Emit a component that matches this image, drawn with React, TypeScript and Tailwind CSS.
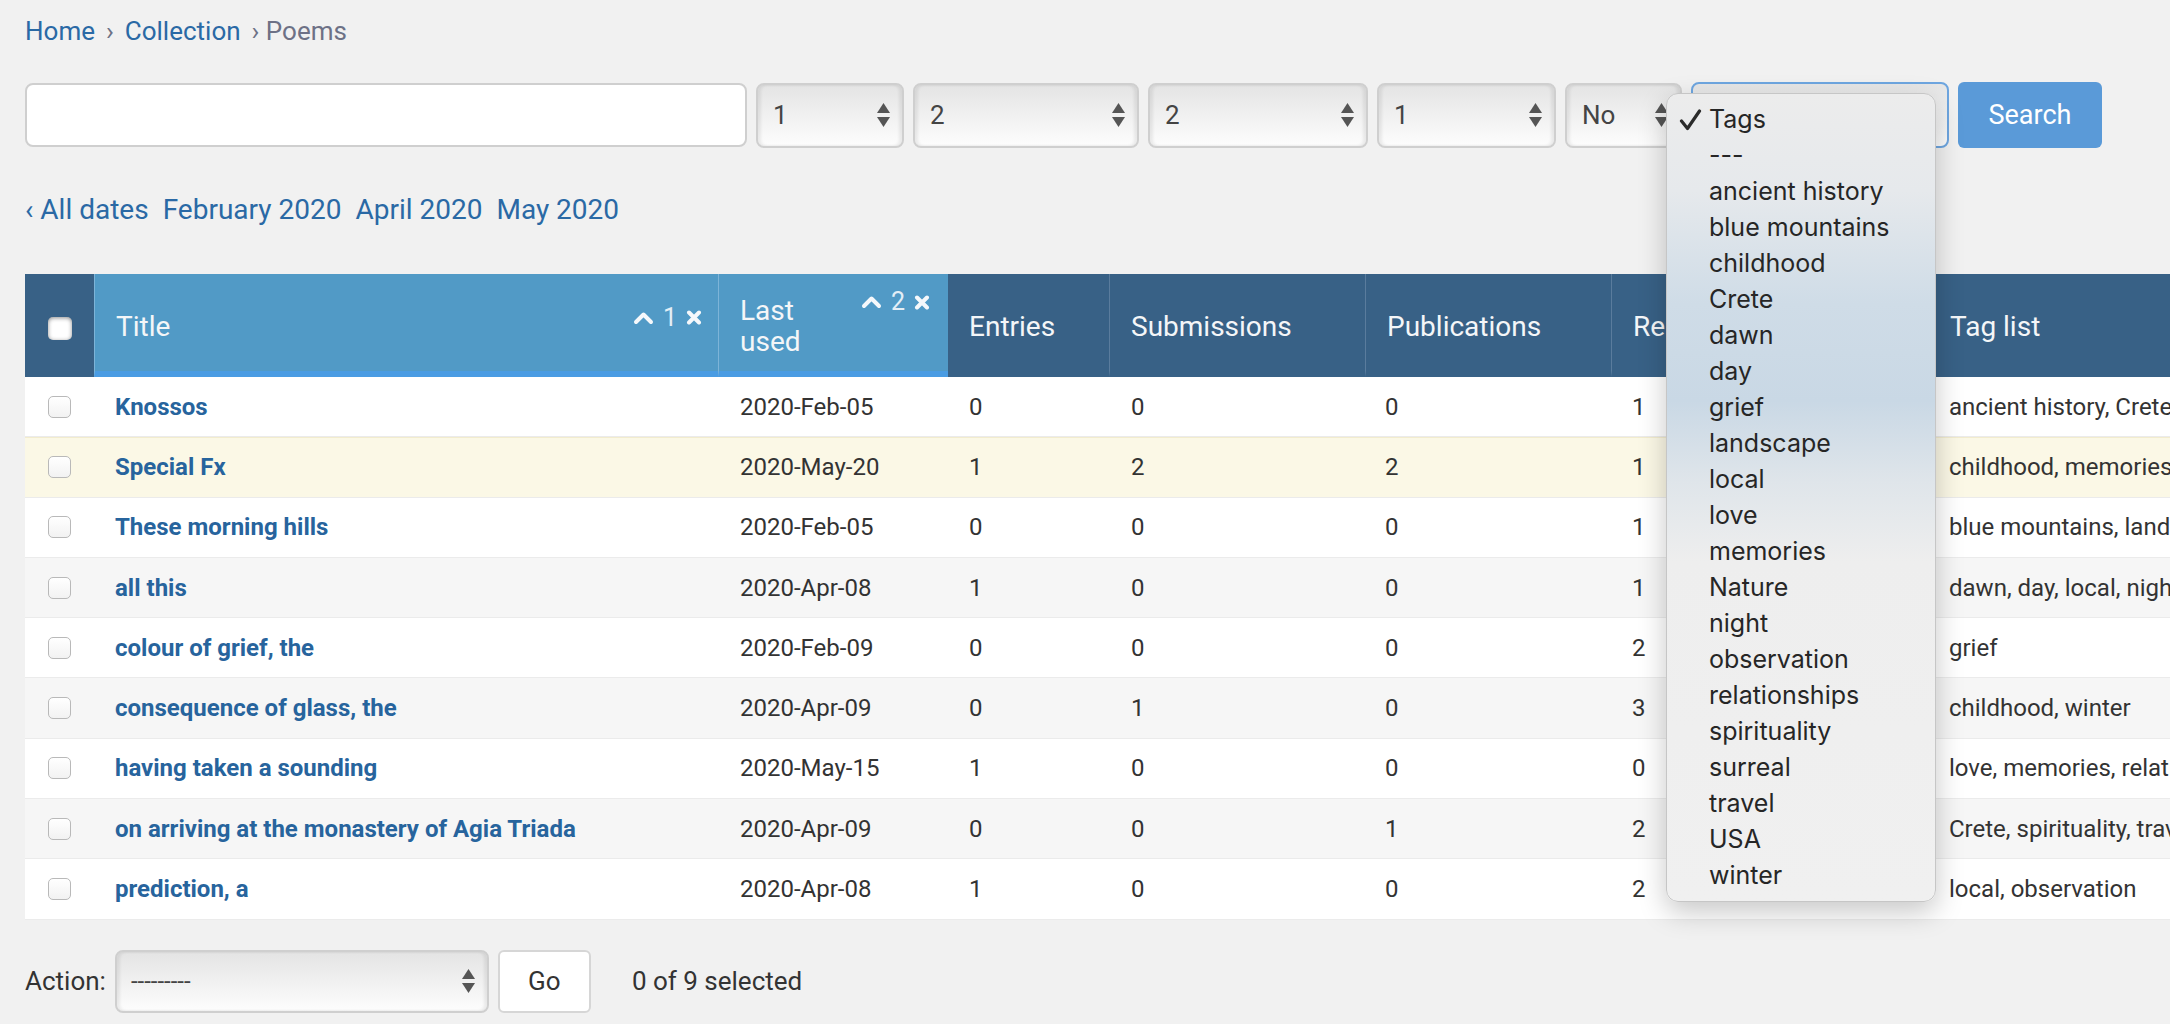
import React from "react";

type Row = {
  title: string;
  date: string;
  entries: number;
  subs: number;
  pubs: number;
  reads: number;
  tags: string;
};

const ROWS: Row[] = [
  { title: "Knossos", date: "2020-Feb-05", entries: 0, subs: 0, pubs: 0, reads: 1, tags: "ancient history, Crete, travel" },
  { title: "Special Fx", date: "2020-May-20", entries: 1, subs: 2, pubs: 2, reads: 1, tags: "childhood, memories, surreal" },
  { title: "These morning hills", date: "2020-Feb-05", entries: 0, subs: 0, pubs: 0, reads: 1, tags: "blue mountains, landscape, Nature" },
  { title: "all this", date: "2020-Apr-08", entries: 1, subs: 0, pubs: 0, reads: 1, tags: "dawn, day, local, night" },
  { title: "colour of grief, the", date: "2020-Feb-09", entries: 0, subs: 0, pubs: 0, reads: 2, tags: "grief" },
  { title: "consequence of glass, the", date: "2020-Apr-09", entries: 0, subs: 1, pubs: 0, reads: 3, tags: "childhood, winter" },
  { title: "having taken a sounding", date: "2020-May-15", entries: 1, subs: 0, pubs: 0, reads: 0, tags: "love, memories, relationships" },
  { title: "on arriving at the monastery of Agia Triada", date: "2020-Apr-09", entries: 0, subs: 0, pubs: 1, reads: 2, tags: "Crete, spirituality, travel" },
  { title: "prediction, a", date: "2020-Apr-08", entries: 1, subs: 0, pubs: 0, reads: 2, tags: "local, observation" },
];

const ROW_BG = [
  "bg-white",
  "bg-[#fbf8e6] border-t border-t-[#f2ecce]",
  "bg-white",
  "bg-[#f6f6f6]",
  "bg-white",
  "bg-[#f6f6f6]",
  "bg-white",
  "bg-[#f6f6f6]",
  "bg-white",
];

const TAGS = [
  "Tags",
  "---",
  "ancient history",
  "blue mountains",
  "childhood",
  "Crete",
  "dawn",
  "day",
  "grief",
  "landscape",
  "local",
  "love",
  "memories",
  "Nature",
  "night",
  "observation",
  "relationships",
  "spirituality",
  "surreal",
  "travel",
  "USA",
  "winter",
];

function Arrows() {
  return (
    <svg width="13" height="24" viewBox="0 0 13 24" className="shrink-0 fill-[#555]">
      <path d="M6.5 0 L13 10 L0 10 Z" />
      <path d="M0 14 L13 14 L6.5 24 Z" />
    </svg>
  );
}

function Select({ value, className }: { value: string; className: string }) {
  return (
    <div
      className={`flex h-[65px] shrink-0 items-center justify-between rounded-[8px] border-2 border-[#cfcfcf] bg-linear-to-b from-[#e4e4e4] to-[#fdfdfd] pl-[15px] pr-[12px] text-[26px] text-[#444] shadow-[inset_3px_0_3px_rgba(0,0,0,0.07),inset_-3px_0_3px_rgba(0,0,0,0.07)] ${className}`}
    >
      <span>{value}</span>
      <Arrows />
    </div>
  );
}

function SortOpts({ n }: { n: string }) {
  return (
    <div className="-mt-[6px] flex shrink-0 items-center gap-[9px] text-[25px] leading-[26px] text-[#e3eef6]">
      <svg width="21" height="14" viewBox="0 0 21 14" fill="none" stroke="#f5f8fb" strokeWidth="4" strokeLinecap="round" strokeLinejoin="round">
        <path d="M3 11 L10.5 3.5 L18 11" />
      </svg>
      <span>{n}</span>
      <svg width="16" height="15" viewBox="0 0 16 15" fill="none" stroke="#f5f8fb" strokeWidth="4" strokeLinecap="round">
        <path d="M3 2.5 L13 12.5 M13 2.5 L3 12.5" />
      </svg>
    </div>
  );
}

function RowCheckbox() {
  return <span className="block h-[22px] w-[23px] rounded-[5px] border border-[#b9b9b9] bg-linear-to-b from-white to-[#f2f2f2]" />;
}

export default function App() {
  return (
    <div className="relative min-h-[1024px] w-full overflow-hidden bg-[#f1f1f1] px-[25px] pt-[16px] font-[Roboto,sans-serif] text-[#333]">
      {/* breadcrumbs */}
      <div className="flex h-[30px] items-center gap-[11px] text-[26px] leading-[30px]">
        <span className="text-[#2a69a5]">Home</span>
        <span className="text-[#6d7186]">›</span>
        <span className="text-[#2a69a5]">Collection</span>
        <span className="text-[#6d7186]">› Poems</span>
      </div>

      {/* search + filters */}
      <div className="mt-[36px] flex h-[66px] items-center gap-[9px]">
        <div className="h-[64px] w-[722px] shrink-0 rounded-[8px] border-2 border-[#cfcfcf] bg-white" />
        <Select value="1" className="w-[148px]" />
        <Select value="2" className="w-[226px]" />
        <Select value="2" className="w-[220px]" />
        <Select value="1" className="w-[179px]" />
        <Select value="No" className="w-[117px]" />
        <div className="flex h-[66px] w-[258px] shrink-0 items-center justify-end rounded-[8px] border-2 border-[#6ea6e0] bg-linear-to-b from-[#e6e6e6] to-[#fdfdfd] pr-[12px]">
          <Arrows />
        </div>
        <button className="h-[66px] w-[144px] shrink-0 rounded-[6px] bg-[#5a9ad8] text-[27px] text-white">
          Search
        </button>
      </div>

      {/* date hierarchy */}
      <div className="mt-[45px] flex gap-[14px] text-[28px] leading-[34px] text-[#2a69a5]">
        <span>‹ All dates</span>
        <span>February 2020</span>
        <span>April 2020</span>
        <span>May 2020</span>
      </div>

      {/* results table */}
      <div className="mt-[47px] w-max">
        <div className="flex h-[103px] text-[28px] leading-[31px] text-[#f4f6f8]">
          <div className="flex w-[69px] shrink-0 items-center justify-center border-b-[6px] border-b-[#386186] bg-[#386186] pt-[12px]">
            <span className="block h-[23px] w-[24px] rounded-[5px] bg-white shadow-[inset_0_1px_4px_rgba(0,0,0,0.45)]" />
          </div>
          <div className="flex w-[624px] shrink-0 items-center border-b-[6px] border-l border-b-[#4a9ce3] border-l-[#7db4d8] bg-[#519ac6] pl-[21px] pr-[16px] pt-[7px]">
            <div className="flex flex-1 items-start justify-between">
              <span>Title</span>
              <SortOpts n="1" />
            </div>
          </div>
          <div className="flex w-[230px] shrink-0 items-center border-b-[6px] border-l border-b-[#4a9ce3] border-l-[#7db4d8] bg-[#519ac6] pl-[21px] pr-[18px] pt-[7px]">
            <div className="flex flex-1 items-start justify-between">
              <span>
                Last
                <br />
                used
              </span>
              <SortOpts n="2" />
            </div>
          </div>
          <div className="flex w-[161px] shrink-0 items-center border-b-[6px] border-b-[#386186] bg-[#386186] pl-[21px] pt-[7px]">
            Entries
          </div>
          <div className="flex w-[256px] shrink-0 items-center border-b-[6px] border-l border-b-[#386186] border-l-[#5a7c9d] bg-[#386186] pl-[21px] pt-[7px]">
            Submissions
          </div>
          <div className="flex w-[246px] shrink-0 items-center border-b-[6px] border-l border-b-[#386186] border-l-[#5a7c9d] bg-[#386186] pl-[21px] pt-[7px]">
            Publications
          </div>
          <div className="flex w-[317px] shrink-0 items-center border-b-[6px] border-l border-b-[#386186] border-l-[#5a7c9d] bg-[#386186] pl-[21px] pt-[7px]">
            Readings
          </div>
          <div className="flex w-[560px] shrink-0 items-center border-b-[6px] border-l border-b-[#386186] border-l-[#5a7c9d] bg-[#386186] pl-[21px] pt-[7px]">
            Tag list
          </div>
        </div>

        {ROWS.map((r, i) => (
          <div key={r.title} className={`flex h-[60.3px] border-b border-b-[#ebebeb] text-[24px] ${ROW_BG[i]}`}>
            <div className="flex w-[69px] shrink-0 items-center justify-center">
              <RowCheckbox />
            </div>
            <div className="flex w-[624px] shrink-0 items-center pl-[21px] font-bold text-[#27649d]">{r.title}</div>
            <div className="flex w-[230px] shrink-0 items-center pl-[22px]">{r.date}</div>
            <div className="flex w-[161px] shrink-0 items-center pl-[21px]">{r.entries}</div>
            <div className="flex w-[256px] shrink-0 items-center pl-[22px]">{r.subs}</div>
            <div className="flex w-[246px] shrink-0 items-center pl-[20px]">{r.pubs}</div>
            <div className="flex w-[317px] shrink-0 items-center pl-[21px]">{r.reads}</div>
            <div className="flex w-[560px] shrink-0 items-center whitespace-nowrap pl-[21px]">{r.tags}</div>
          </div>
        ))}
      </div>

      {/* actions */}
      <div className="mt-[30px] flex h-[63px] items-center text-[26px]">
        <span>Action:</span>
        <div className="ml-[9px] flex h-[63px] w-[374px] items-center justify-between rounded-[8px] border-2 border-[#cfcfcf] bg-linear-to-b from-[#e4e4e4] to-[#fdfdfd] pl-[14px] pr-[12px] shadow-[inset_3px_0_3px_rgba(0,0,0,0.07),inset_-3px_0_3px_rgba(0,0,0,0.07)]">
          <span className="text-[24px] text-[#444]">---------</span>
          <Arrows />
        </div>
        <button className="ml-[9px] h-[63px] w-[93px] rounded-[6px] border-2 border-[#d6d6d6] bg-white text-[26px] text-[#333]">
          Go
        </button>
        <span className="ml-[41px]">0 of 9 selected</span>
      </div>

      {/* open tags menu */}
      <div className="absolute left-[1666px] top-[93px] h-[809px] w-[270px] rounded-[12px] border border-[#c6c6c6] bg-[linear-gradient(180deg,#ececec_0%,#e6e9ec_12%,#cfdce7_26%,#c9d8e5_38%,#dfe5ea_48%,#eeeeee_58%,#f0f0f0_100%)] pt-[8px] font-[Inter,sans-serif] text-[25px] text-[#262626] shadow-[0_10px_28px_rgba(0,0,0,0.22)]">
        {TAGS.map((t, i) => (
          <div key={t} className="flex h-[36px] items-center">
            <div className="flex w-[42px] shrink-0 items-center pl-[12px]">
              {i === 0 && (
                <svg width="23" height="22" viewBox="0 0 23 22" fill="none" stroke="#2b2b2b" strokeWidth="3.2" strokeLinecap="round" strokeLinejoin="round">
                  <path d="M2.5 12 L8.5 19.5 L20.5 2" />
                </svg>
              )}
            </div>
            <span>{t}</span>
          </div>
        ))}
      </div>
    </div>
  );
}
